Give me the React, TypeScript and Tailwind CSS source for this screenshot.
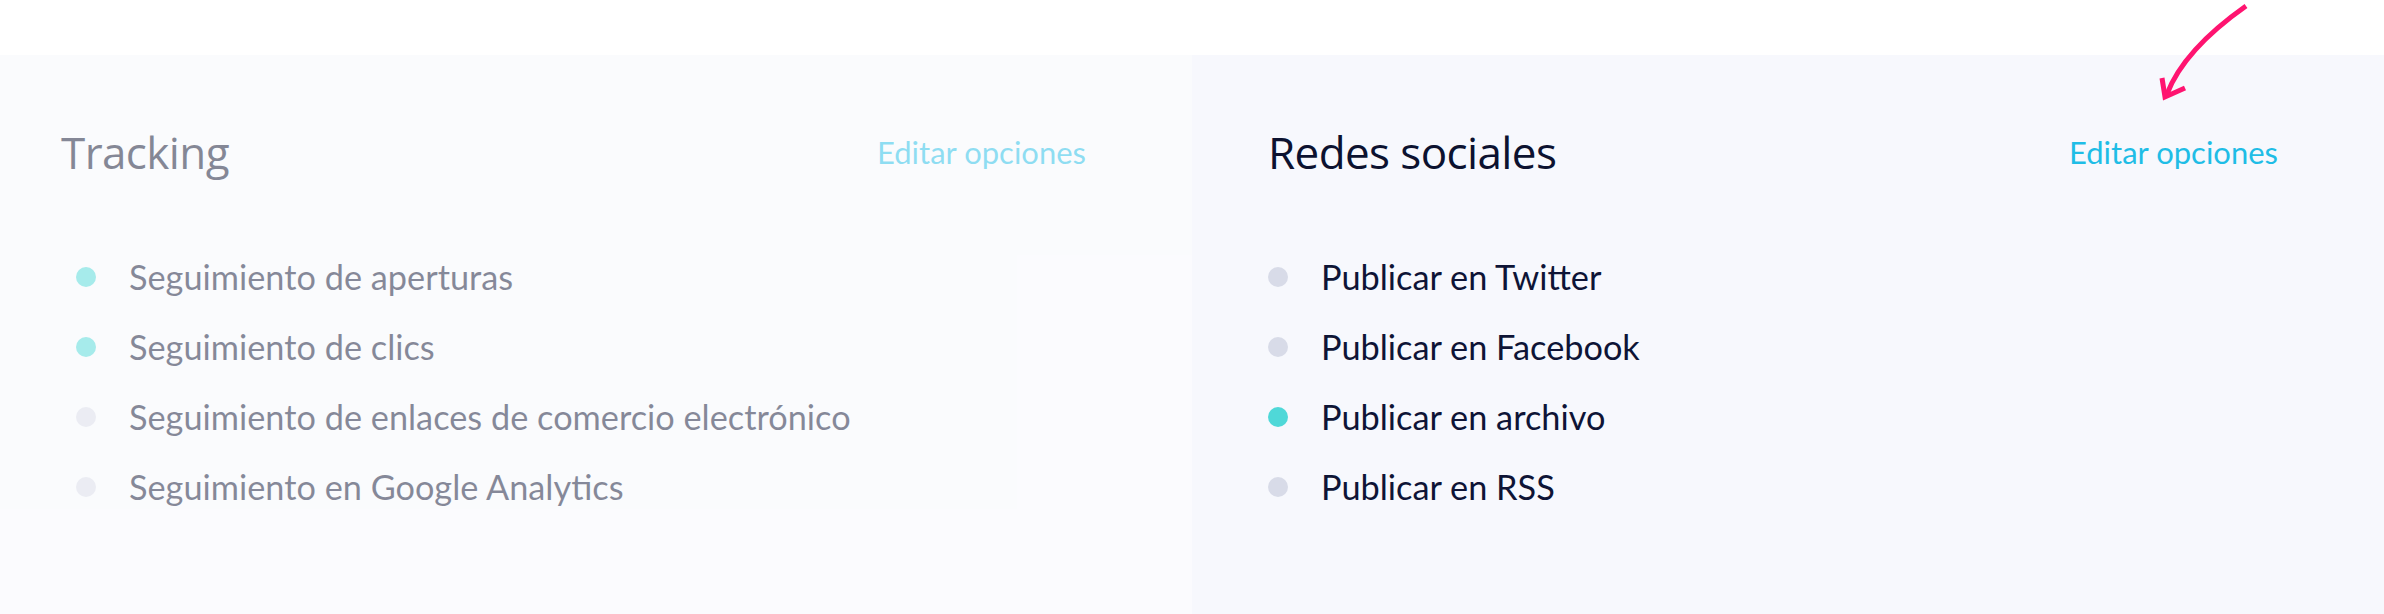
type Item = { label: string; on: boolean };

const tracking: Item[] = [
  { label: "Seguimiento de aperturas", on: true },
  { label: "Seguimiento de clics", on: true },
  { label: "Seguimiento de enlaces de comercio electrónico", on: false },
  { label: "Seguimiento en Google Analytics", on: false },
];

const social: Item[] = [
  { label: "Publicar en Twitter", on: false },
  { label: "Publicar en Facebook", on: false },
  { label: "Publicar en archivo", on: true },
  { label: "Publicar en RSS", on: false },
];

function Panel({
  title,
  items,
  faded,
  titleClass,
}: {
  title: string;
  items: Item[];
  faded?: boolean;
  titleClass?: string;
}) {
  return (
    <section
      className={`h-[559px] w-1/2 bg-[#f7f8fd] pl-[76px] pr-[106px] pt-[72px] ${faded ? "opacity-50" : ""}`}
    >
      <div className="flex h-[50px] items-center justify-between">
        <h2
          className={`font-['Open_Sans',sans-serif] text-[44px] leading-none tracking-[-0.6px] text-[#0c1230] ${titleClass ?? ""}`}
        >
          {title}
        </h2>
        <a className="font-['Lato',sans-serif] text-[31px] leading-none text-[#1fbde6]">
          Editar opciones
        </a>
      </div>
      <ul className="mt-[65px]">
        {items.map((it) => (
          <li key={it.label} className="flex h-[70px] items-center gap-[33px]">
            <span
              className={`h-5 w-5 shrink-0 rounded-full ${it.on ? "bg-[#4fd8d8]" : "bg-[#d8dbe8]"}`}
            />
            <span className="font-['Lato',sans-serif] text-[34.3px] leading-none text-[#0e1436]">
              {it.label}
            </span>
          </li>
        ))}
      </ul>
    </section>
  );
}

export default function App() {
  return (
    <div className="relative h-[614px] w-[2384px] overflow-hidden bg-white pt-[55px]">
      <div className="flex">
        <Panel title="Tracking" items={tracking} faded titleClass="-ml-[15px]" />
        <Panel title="Redes sociales" items={social} />
      </div>
      <svg
        className="absolute left-[2150px] top-0"
        width="110"
        height="110"
        viewBox="0 0 110 110"
        fill="none"
        stroke="#ff1470"
        strokeWidth="5"
      >
        <path d="M96 6 C62 30 30 60 17 94" />
        <path d="M12 78 L15 97 L35 88" strokeLinejoin="miter" />
      </svg>
    </div>
  );
}
